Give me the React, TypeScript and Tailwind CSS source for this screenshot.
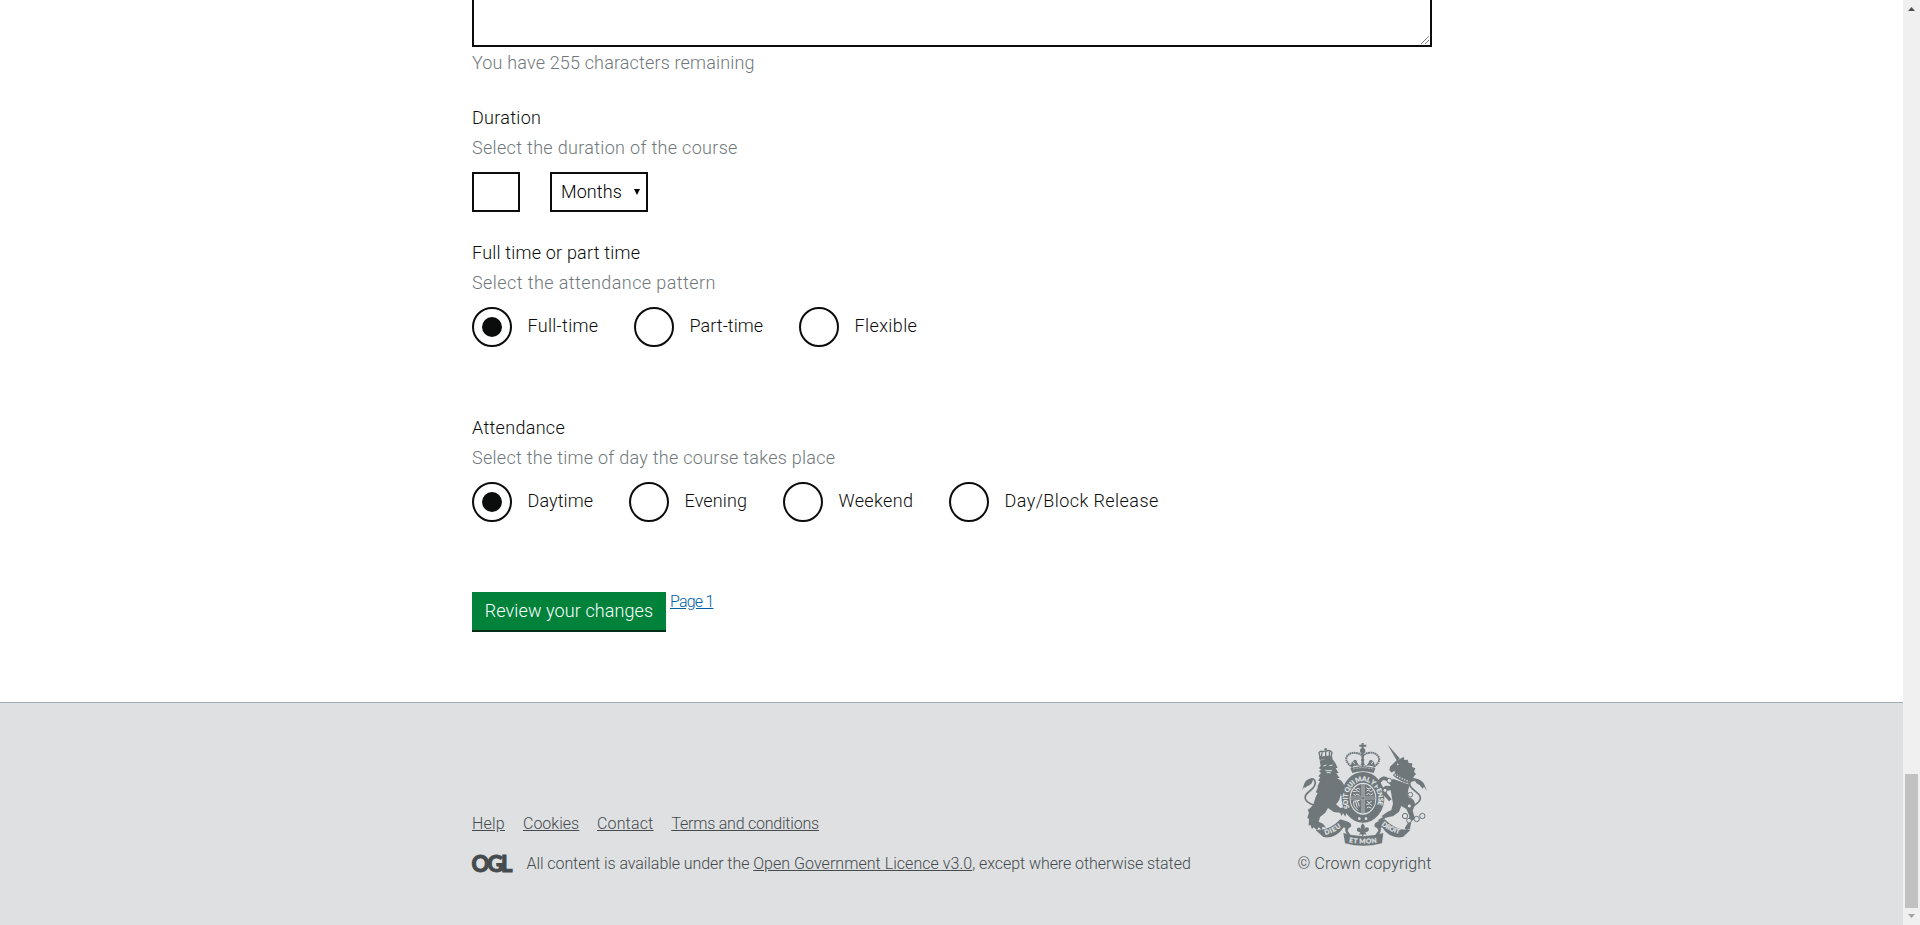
import React from "react";

const line = "h-[25px] leading-[25px] text-[18px] whitespace-nowrap";

function Radio({ label, checked = false, name, box, text }: { label: string; checked?: boolean; name: string; box: string; text: string }) {
  return (
    <label className={`flex h-10 shrink-0 ${box}`}>
      <input type="radio" name={name} defaultChecked={checked} className="sr-only" />
      <svg viewBox="0 0 40 40" className="h-10 w-10 shrink-0" fill="none">
        <circle cx="20" cy="20" r="19" stroke="#0b0c0c" strokeWidth="2" />
        {checked && <circle cx="20" cy="20" r="10" fill="#0b0c0c" />}
      </svg>
      <span className={`ml-[15.5px] pt-[6px] ${line} ${text}`}>{label}</span>
    </label>
  );
}

function Crest() {
  return (
    <svg viewBox="0 0 396 336" className="h-[112px] w-[132px]" fill="#6f777b">
      <defs>
        <path id="garter" d="M155 209 A46 53 0 1 1 235 209" />
        <path id="left-scroll" d="M82 291 Q112 284 138 260" />
        <path id="right-scroll" d="M250 261 Q278 284 318 291" />
        <path id="mid-scroll" d="M153 313 Q195 320 240 313" />
      </defs>

      {/* lion crown */}
      <g stroke="#6f777b" strokeWidth="4" fill="none">
        <path d="M67 60 L63 45 Q66 37 75 41 Q80 38 84 40 Q94 34 102 43 L99 58 M83 39 V57 M72 42 Q72 51 69 57 M94 41 Q96 50 93 57" />
      </g>
      <circle cx="83" cy="34" r="4" />
      <path d="M63 58 Q83 50 103 56 L103 65 Q83 60 65 67Z" />
      {/* lion */}
      <path d="M65 68 Q84 59 104 64 L112 75 L119 89 L113 91 L122 105 L115 106 L125 120 L117 121 L130 128 Q140 139 143 155 L147 178 Q140 190 133 177 L128 168 Q126 188 114 199 L127 210 Q143 204 150 220 L151 231 L145 225 L142 236 L135 225 L131 234 L126 224 L107 222 L90 210 L82 224 L66 237 L62 251 L75 257 L84 269 L73 266 L72 276 L62 268 L57 276 L47 268 L42 273 L37 260 L32 263 L33 243 L28 239 L33 224 L29 216 Q46 205 49 190 Q51 178 59 165 L53 163 Q61 151 59 143 L66 130 L60 128 L67 118 L61 115 L69 105 L63 99 L70 95 L63 91 L68 83Z" />
      <path d="M76 84 L85 81 M94 83 L104 81 M82 98 L102 98 M86 104 L98 104" stroke="#dee0e2" strokeWidth="3" />
      <path d="M49 202 C14 190 17 174 32 162 C49 149 57 139 50 127 C43 117 28 126 23 138" fill="none" stroke="#6f777b" strokeWidth="5" />
      <path d="M12 156 L20 134 Q28 119 45 124 Q43 140 27 145 L20 151 L19 146Z" />

      {/* crown */}
      <g fill="none" stroke="#6f777b" strokeWidth="6">
        <path d="M164 88 Q142 73 145 59 Q152 42 175 45 Q191 47 194 57 Q197 47 214 44 Q237 43 243 60 Q246 74 226 88" strokeDasharray="5 1.5" />
        <path d="M194 31 V88 M184 23 H205 M194 15 V31" />
      </g>
      <circle cx="194" cy="38" r="8" />
      <path d="M158 86 L162 70 L169 79 L174 68 L181 79 L186 86 L194 66 L203 86 L209 78 L215 68 L221 79 L228 70 L231 86 Q194 76 158 86Z" />
      <circle cx="171" cy="70" r="5" /><circle cx="219" cy="70" r="5" /><circle cx="194" cy="66" r="5" />
      <path d="M157 91 Q194 79 232 91 L227 105 Q194 95 163 105Z" />
      <path d="M166 93 Q194 85 224 93" fill="none" stroke="#dee0e2" strokeWidth="2" strokeDasharray="6 3" />

      {/* garter and shield */}
      <path fillRule="evenodd" d="M195 102 A64 72 0 0 1 259 175 A64 74 0 0 1 195 254 A64 74 0 0 1 131 175 A64 72 0 0 1 195 102Z M195 134 A40 45 0 0 0 155 180 A40 48 0 0 0 195 230 A40 48 0 0 0 235 180 A40 45 0 0 0 195 134Z" />
      <text fill="#dee0e2" fontFamily="Lato" fontWeight="900" fontSize="20" stroke="#dee0e2" strokeWidth="0.6">
        <textPath href="#garter" textLength="200">SOIT QUI MAL Y PENSE</textPath>
      </text>
      <circle cx="184" cy="242" r="4" fill="#dee0e2" /><circle cx="204" cy="242" r="4" fill="#dee0e2" />
      <ellipse cx="195" cy="182" rx="37" ry="44" />
      <path d="M195 138 V226 M158 180 H232" stroke="#dee0e2" strokeWidth="8" />
      <path d="M195 138 V226 M158 180 H232" stroke="#6f777b" strokeWidth="4" />
      <g stroke="#dee0e2" strokeWidth="3" fill="none">
        <path d="M168 151 l6 4 l7 -5 l4 5 M164 160 l8 1 l5 -3 l8 4 M166 169 l6 3 l5 -4 l8 4" />
        <path d="M205 149 l8 4 l6 -3 M206 159 l5 -3 l7 5 l6 -3 M205 170 l7 -4 l6 5 l8 -5" />
        <path d="M167 190 Q165 209 181 217 M172 188 L178 209 M178 188 L184 205 M166 190 L185 187" />
        <path d="M207 190 l6 4 l8 -4 M205 200 l9 -3 l8 5 M206 210 l6 -3 l8 3" />
      </g>

      {/* unicorn */}
      <path d="M269 20 L305 61 L297 69Z" />
      <path d="M296 67 L307 62 L317 56 L319 66 L329 65 L332 75 L343 76 L342 87 L352 91 L348 101 L354 108 L346 117 L351 129 L340 131 L327 127 L312 119 L291 105 L289 98 L281 104 L274 97 L276 86 L287 76Z" />
      <circle cx="299" cy="79" r="2.5" fill="#dee0e2" />
      <path d="M288 108 Q308 126 337 133" fill="none" stroke="#6f777b" strokeWidth="11" />
      <path d="M290 110 Q310 124 335 131" fill="none" stroke="#dee0e2" strokeWidth="4" strokeDasharray="4 4" />
      <path d="M284 122 L335 140 Q327 164 331 177 Q352 184 351 200 L344 218 L351 242 L340 250 L336 272 L325 277 L320 270 L331 253 L334 233 L325 213 L310 204 L303 221 L286 234 L263 239 L246 253 L240 246 L255 237 L251 234 L268 222 L280 216 L285 197 L282 180 L278 157 L266 158 L266 165 L281 184 L273 190 L254 168 L251 151 L263 143 L277 144Z" />
      <path d="M279 143 L265 128 L256 126 L247 135 L247 148 L241 153 L238 136 L245 121 L257 115 L267 118 L287 130Z" />
      <path d="M340 207 C374 190 372 176 356 163 C336 148 329 138 339 128 C350 118 365 127 370 139" fill="none" stroke="#6f777b" strokeWidth="5" />
      <path d="M387 159 L378 137 Q368 121 350 123 Q351 136 365 141 L374 152 L378 146Z" />
      <g fill="#dee0e2" stroke="#6f777b" strokeWidth="3">
        <circle cx="274" cy="128" r="7" /><circle cx="261" cy="157" r="6" /><circle cx="337" cy="170" r="7" /><circle cx="334" cy="204" r="6" />
        <circle cx="321" cy="234" r="8" /><circle cx="333" cy="248" r="7" /><circle cx="356" cy="243" r="8" /><circle cx="373" cy="234" r="8" />
      </g>

      {/* motto scrolls */}
      <path d="M52 275 Q94 280 127 244 L150 251 Q162 256 159 266 Q150 269 149 278 L157 290 L150 293 Q139 280 142 270 L137 268 Q113 304 76 297Z" />
      <path d="M338 275 Q295 280 260 244 L238 251 Q227 256 230 266 Q240 269 241 278 L232 290 L240 293 Q252 280 248 270 L252 268 Q276 304 315 297Z" />
      <path d="M136 285 Q194 304 256 285 L252 316 Q195 331 141 316Z" />
      <g fill="#dee0e2" fontFamily="Lato" fontWeight="900" fontSize="20" stroke="#dee0e2" strokeWidth="0.6">
        <text><textPath href="#left-scroll" textLength="54">DIEU</textPath></text>
        <text><textPath href="#right-scroll" textLength="60">DROIT</textPath></text>
        <text><textPath href="#mid-scroll" textLength="84">ET MON</textPath></text>
      </g>
      <path d="M194 256 Q205 266 198 279 Q202 263 212 270 Q215 280 205 282 H202 L206 291 L198 288 L194 297 L190 288 L183 291 L187 282 H183 Q174 280 178 270 Q187 264 191 279 Q184 266 194 256Z" />
    </svg>
  );
}

export default function App() {
  return (
    <div className="flex h-[925px] w-full overflow-hidden bg-white font-[Roboto,sans-serif] font-light text-[#0b0c0c]">
      <div className="flex min-w-0 flex-1 flex-col">
        <main className="ml-[472px] flex h-[702px] w-[960px] shrink-0 flex-col">
          <div className="flex h-[47px] shrink-0 items-end justify-end border-2 border-t-0 border-[#0b0c0c] p-px">
            <svg viewBox="0 0 8 8" className="h-2 w-2" stroke="#55555c" strokeWidth="1" strokeDasharray="1.1 0.4">
              <path d="M0 8 L8 0 M4 8 L8 4" />
            </svg>
          </div>
          <p className={`mt-[3px] tracking-[0.16px] text-[#6f777b] ${line}`}>You have 255 characters remaining</p>

          <h2 className={`mt-[30px] tracking-[0.3px] ${line}`}>Duration</h2>
          <p className={`mt-[5px] tracking-[0.32px] text-[#6f777b] ${line}`}>Select the duration of the course</p>
          <div className="mt-3 flex h-10 gap-[30px]">
            <div className="w-12 border-2 border-[#0b0c0c]" />
            <div className="flex w-[98px] justify-between border-2 border-[#0b0c0c] pt-[5px] pr-[6px] pl-[9px] text-black">
              <span className={`tracking-[0.1px] ${line}`}>Months</span>
              <svg viewBox="0 0 6 6" className="mt-[10px] h-[6px] w-[6px]"><path d="M0 0 H6 L3 6Z" /></svg>
            </div>
          </div>

          <h2 className={`mt-7 tracking-[0.2px] ${line}`}>Full time or part time</h2>
          <p className={`mt-[5px] tracking-[0.42px] text-[#6f777b] ${line}`}>Select the attendance pattern</p>
          <div className="mt-3 flex h-10">
            <Radio name="pattern" label="Full-time" checked box="w-[162px]" text="tracking-[0.3px]" />
            <Radio name="pattern" label="Part-time" box="w-[165px]" text="tracking-[0.05px]" />
            <Radio name="pattern" label="Flexible" box="w-[160px]" text="tracking-[0.4px]" />
          </div>

          <h2 className={`mt-[68px] tracking-[0.3px] ${line}`}>Attendance</h2>
          <p className={`mt-[5px] tracking-[0.27px] text-[#6f777b] ${line}`}>Select the time of day the course takes place</p>
          <div className="mt-3 flex h-10">
            <Radio name="time" label="Daytime" checked box="w-[157px]" text="tracking-[0.1px]" />
            <Radio name="time" label="Evening" box="w-[154px]" text="tracking-[0.15px]" />
            <Radio name="time" label="Weekend" box="w-[166px]" text="tracking-[0.35px]" />
            <Radio name="time" label="Day/Block Release" box="w-[220px]" text="tracking-[0.43px]" />
          </div>

          <div className="mt-[70px] flex items-start">
            <button className={`box-content w-[194px] border-b-2 border-[#002d18] bg-[#00823b] pt-[6px] pb-[7px] tracking-[0.1px] text-white ${line}`}>Review your changes</button>
            <a className="ml-[4px] text-[16px] leading-[19px] tracking-[-0.8px] whitespace-nowrap text-[#005ea5] underline underline-offset-1">Page 1</a>
          </div>
        </main>

        <footer className="flex h-[223px] shrink-0 border-t border-[#a1acb2] bg-[#dee0e2] pl-[472px] text-[16px] leading-5 whitespace-nowrap text-[#454a4c]">
          <div className="flex w-[780px] flex-col pt-[111px]">
            <div className="flex h-5 underline underline-offset-1">
              <a className="w-[51px] tracking-[0.2px]">Help</a>
              <a className="w-[74px]">Cookies</a>
              <a className="w-[74.5px] tracking-[0.15px]">Contact</a>
              <a className="tracking-[-0.23px]">Terms and conditions</a>
            </div>
            <div className="mt-5 flex h-5">
              <svg viewBox="0 0 41 18" className="mt-px h-[18px] w-[41px] overflow-visible" fill="#454a4c">
                <text x="-0.5" y="17" fontFamily="Lato" fontWeight="900" fontSize="22" textLength="41" stroke="#454a4c" strokeWidth="0.9">OGL</text>
              </svg>
              <p className="ml-[13.5px] tracking-[-0.07px]">
                All content is available under the <a className="tracking-[0.04px] underline underline-offset-1">Open Government Licence v3.0</a>, except where otherwise stated
              </p>
            </div>
          </div>
          <div className="ml-[46px] flex w-[134px] flex-col pt-[35px]">
            <Crest />
            <span className="mt-[4px] -ml-[0.5px] tracking-[0.15px]">© Crown copyright</span>
          </div>
        </footer>
      </div>

      <div className="flex w-[17px] shrink-0 flex-col items-center bg-[#f0f0f0]">
        <svg viewBox="0 0 7 4" className="mt-[7px] h-1 w-[7px]" fill="#505050"><path d="M3.5 0 L7 4 H0Z" /></svg>
        <div className="mt-[763px] h-[134px] w-[13px] bg-[#c1c1c1]" />
        <svg viewBox="0 0 7 4" className="mt-[6px] h-1 w-[7px]" fill="#a3a3a3"><path d="M0 0 H7 L3.5 4Z" /></svg>
      </div>
    </div>
  );
}
